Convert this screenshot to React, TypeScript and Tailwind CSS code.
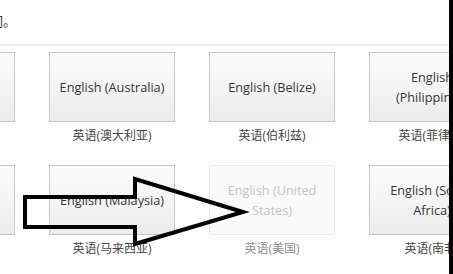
import React from "react";

type Lang = { en: string; zh: string; disabled?: boolean };

const rows: Lang[][] = [
  [
    { en: "English (India)", zh: "英语(印度)" },
    { en: "English (Australia)", zh: "英语(澳大利亚)" },
    { en: "English (Belize)", zh: "英语(伯利兹)" },
    { en: "English (Philippines)", zh: "英语(菲律宾)" },
  ],
  [
    { en: "English (Ireland)", zh: "英语(爱尔兰)" },
    { en: "English (Malaysia)", zh: "英语(马来西亚)" },
    { en: "English (United States)", zh: "英语(美国)", disabled: true },
    { en: "English (South Africa)", zh: "英语(南非)" },
  ],
];

const font = { fontFamily: '"Open Sans", "Noto Sans CJK SC", sans-serif' };

function Tile({ item }: { item: Lang }) {
  return (
    <div className="flex flex-col items-center w-[126px] shrink-0">
      <div
        className={`w-[126px] h-[70px] flex items-center justify-center text-center px-[9px] text-[12.7px] leading-[20px] border ${
          item.disabled
            ? "border-[#e8e8e8] bg-[#fafafa] text-[#c4c4c4]"
            : "border-[#c6c6c6] bg-gradient-to-b from-[#fcfcfc] to-[#ececec] text-[#363636]"
        }`}
      >
        {item.en}
      </div>
      <div
        className={`mt-[4px] text-[12px] leading-[20px] whitespace-nowrap ${
          item.disabled ? "text-[#8c8c8c]" : "text-[#444]"
        }`}
      >
        {item.zh}
      </div>
    </div>
  );
}

export default function App() {
  return (
    <div className="w-[453px] h-[274px] bg-white flex overflow-hidden relative" style={font}>
      <div className="flex-1 flex flex-col overflow-hidden">
        <div className="h-[44px] shrink-0 overflow-hidden pt-[12px]">
          <div className="-ml-[10px] text-[13px] text-[#333] whitespace-nowrap">们。</div>
        </div>
        <div className="h-[2px] bg-[#ececec] shrink-0" />
        <div className="flex flex-col gap-[19px] pt-[6px]">
          {rows.map((row, ri) => (
            <div key={ri} className="flex gap-[34px] -ml-[111px]">
              {row.map((item) => (
                <Tile key={item.en} item={item} />
              ))}
            </div>
          ))}
        </div>
      </div>
      <div className="w-[4px] bg-black shrink-0" />
      <svg className="absolute left-0 top-0 pointer-events-none" width="453" height="274">
        <polygon
          points="25,197 135,197 135,179 243,212 135,244 135,227 25,227"
          fill="none"
          stroke="#000"
          strokeWidth="4"
          strokeLinejoin="miter"
        />
      </svg>
    </div>
  );
}
